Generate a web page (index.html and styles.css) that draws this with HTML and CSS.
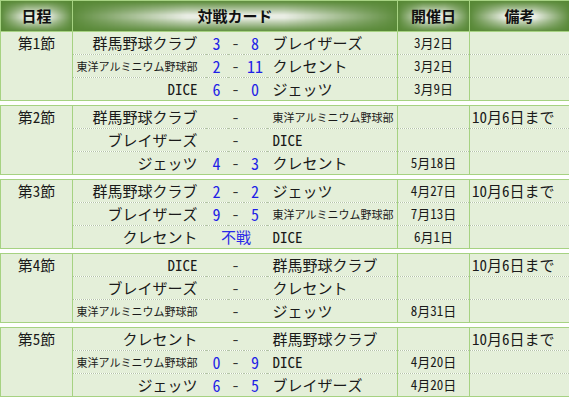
FILE: index.html
```html
<!DOCTYPE html>
<html lang="ja">
<head>
  <meta charset="UTF-8" />
  <title>リーグ日程</title>
  <link rel="stylesheet" href="styles.css">
</head>
<body>
  <table class="league">
    <colgroup>
      <col class="w-round"><col class="w-home"><col class="w-score"><col class="w-dash"><col class="w-score2"><col class="w-away"><col class="w-date"><col class="w-note">
    </colgroup>
    <!-- Header -->
    <thead>
      <tr>
        <th>日程</th>
        <th colspan="5">対戦カード</th>
        <th>開催日</th>
        <th>備考</th>
      </tr>
    </thead>
    <!-- 第1節 -->
    <tbody>
      <tr>
        <td class="round" rowspan="3">第1節</td>
        <td class="home">群馬野球クラブ</td><td class="score">3</td><td class="dash">-</td><td class="score">8</td>
        <td class="away">ブレイザーズ</td><td class="date">3月2日</td><td class="note"></td>
      </tr>
      <tr>
        <td class="home small">東洋アルミニウム野球部</td><td class="score">2</td><td class="dash">-</td><td class="score">11</td>
        <td class="away">クレセント</td><td class="date">3月2日</td><td class="note"></td>
      </tr>
      <tr class="last">
        <td class="home">DICE</td><td class="score">6</td><td class="dash">-</td><td class="score">0</td>
        <td class="away">ジェッツ</td><td class="date">3月9日</td><td class="note"></td>
      </tr>
    </tbody>
    <tbody class="gap"><tr><td colspan="8"></td></tr></tbody>
    <!-- 第2節 -->
    <tbody>
      <tr>
        <td class="round" rowspan="3">第2節</td>
        <td class="home">群馬野球クラブ</td><td class="score"></td><td class="dash">-</td><td class="score"></td>
        <td class="away small">東洋アルミニウム野球部</td><td class="date"></td><td class="note">10月6日まで</td>
      </tr>
      <tr>
        <td class="home">ブレイザーズ</td><td class="score"></td><td class="dash">-</td><td class="score"></td>
        <td class="away">DICE</td><td class="date"></td><td class="note"></td>
      </tr>
      <tr class="last">
        <td class="home">ジェッツ</td><td class="score">4</td><td class="dash">-</td><td class="score">3</td>
        <td class="away">クレセント</td><td class="date">5月18日</td><td class="note"></td>
      </tr>
    </tbody>
    <tbody class="gap"><tr><td colspan="8"></td></tr></tbody>
    <!-- 第3節 -->
    <tbody>
      <tr>
        <td class="round" rowspan="3">第3節</td>
        <td class="home">群馬野球クラブ</td><td class="score">2</td><td class="dash">-</td><td class="score">2</td>
        <td class="away">ジェッツ</td><td class="date">4月27日</td><td class="note">10月6日まで</td>
      </tr>
      <tr>
        <td class="home">ブレイザーズ</td><td class="score">9</td><td class="dash">-</td><td class="score">5</td>
        <td class="away small">東洋アルミニウム野球部</td><td class="date">7月13日</td><td class="note"></td>
      </tr>
      <tr class="last">
        <td class="home">クレセント</td><td class="forfeit" colspan="3">不戦</td>
        <td class="away">DICE</td><td class="date">6月1日</td><td class="note"></td>
      </tr>
    </tbody>
    <tbody class="gap"><tr><td colspan="8"></td></tr></tbody>
    <!-- 第4節 -->
    <tbody>
      <tr>
        <td class="round" rowspan="3">第4節</td>
        <td class="home">DICE</td><td class="score"></td><td class="dash">-</td><td class="score"></td>
        <td class="away">群馬野球クラブ</td><td class="date"></td><td class="note">10月6日まで</td>
      </tr>
      <tr>
        <td class="home">ブレイザーズ</td><td class="score"></td><td class="dash">-</td><td class="score"></td>
        <td class="away">クレセント</td><td class="date"></td><td class="note"></td>
      </tr>
      <tr class="last">
        <td class="home small">東洋アルミニウム野球部</td><td class="score"></td><td class="dash">-</td><td class="score"></td>
        <td class="away">ジェッツ</td><td class="date">8月31日</td><td class="note"></td>
      </tr>
    </tbody>
    <tbody class="gap"><tr><td colspan="8"></td></tr></tbody>
    <!-- 第5節 -->
    <tbody>
      <tr>
        <td class="round" rowspan="3">第5節</td>
        <td class="home">クレセント</td><td class="score"></td><td class="dash">-</td><td class="score"></td>
        <td class="away">群馬野球クラブ</td><td class="date"></td><td class="note">10月6日まで</td>
      </tr>
      <tr>
        <td class="home small">東洋アルミニウム野球部</td><td class="score">0</td><td class="dash">-</td><td class="score">9</td>
        <td class="away">DICE</td><td class="date">4月20日</td><td class="note"></td>
      </tr>
      <tr class="last">
        <td class="home">ジェッツ</td><td class="score">6</td><td class="dash">-</td><td class="score">5</td>
        <td class="away">ブレイザーズ</td><td class="date">4月20日</td><td class="note"></td>
      </tr>
    </tbody>
  </table>
</body>
</html>
```

FILE: styles.css
```css
/* Base */
* { margin: 0; padding: 0; box-sizing: border-box; }
body {
  background: #fff;
  font-family: "Noto Sans Mono CJK JP", "Noto Sans CJK JP", sans-serif;
  color: #1a1a1a;
}

/* Schedule table */
.league {
  width: 569px;
  border-collapse: collapse;
  table-layout: fixed;
}
.w-round { width: 72px; }
.w-home { width: 133px; }
.w-score { width: 22px; }
.w-dash { width: 16px; }
.w-score2 { width: 23px; }
.w-away { width: 131px; }
.w-date { width: 72px; }
.w-note { width: 100px; }

/* Header with boxed gradient */
.league th {
  height: 31px;
  border: 1px solid #a6d282;
  font-size: 15px;
  font-weight: bold;
  line-height: 28px;
  color: #111;
  background:
    linear-gradient(to right, rgba(86,135,52,0.95) 0%, rgba(86,135,52,0) 35%, rgba(86,135,52,0) 65%, rgba(86,135,52,0.95) 100%),
    linear-gradient(to bottom, rgba(86,135,52,0.95) 0%, rgba(86,135,52,0) 45%, rgba(86,135,52,0) 55%, rgba(86,135,52,0.95) 100%),
    #e9ede4;
}

/* Body cells */
.league td {
  height: 23px;
  background: #e4efd9;
  border-left: 1px solid #a6d282;
  border-right: 1px solid #a6d282;
  border-bottom: 1px dotted #b3c4a6;
  font-size: 15px;
  line-height: 20px;
  white-space: nowrap;
  overflow: hidden;
}
.league tbody tr:first-child td { border-top: 1px solid #a6d282; }
.league tr.last td,
.league td.round { border-bottom: 1px solid #a6d282; }

/* no vertical lines inside the match card */
.league td.home { border-right: none; text-align: right; padding-right: 8px; }
.league td.score,
.league td.dash,
.league td.forfeit { border-left: none; border-right: none; text-align: center; }
.league td.away { border-left: none; padding-left: 6px; }

.league td.round { vertical-align: top; text-align: center; padding-top: 1px; }
.league td.score { color: #1f1fe6; font-size: 16px; }
.league td.dash { color: #333; }
.league td.forfeit { color: #2a2ae8; }
.league td.date { text-align: center; font-size: 13px; }
.league td.note { padding-left: 2px; }
.league td.small { font-size: 11px; }

/* white band between rounds */
.league tbody.gap td {
  height: 5px;
  padding: 0;
  background: #fff;
  border-left: hidden;
  border-right: hidden;
  border-bottom: none;
}
```
